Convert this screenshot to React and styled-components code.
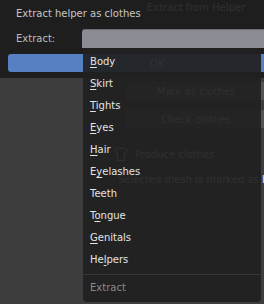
import React from "react";
import styled, { createGlobalStyle } from "styled-components";

const GlobalStyle = createGlobalStyle`
  html, body {
    margin: 0;
    padding: 0;
    background: #3d3d3d;
    overflow: hidden;
  }
  body {
    font-family: "DejaVu Sans", "Liberation Sans", sans-serif;
    font-size: 10px;
  }
`;

const Screen = styled.div`
  position: relative;
  width: 264px;
  height: 304px;
  overflow: hidden;
  background: #3d3d3d;
`;

// sidebar panel that sits behind the popup
const Sidebar = styled.div`
  display: flex;
  flex-direction: column;
  padding-left: 112px;
  color: #e6e6e6;
`;

const PanelButton = styled.div`
  display: flex;
  align-items: center;
  justify-content: center;
  margin-left: 14px;
  margin-top: ${props => props.top || 0}px;
  width: 140px;
  height: ${props => props.h || 18}px;
  border-radius: 3px;
  background: ${props => (props.flat ? "transparent" : "#545454")};
  white-space: nowrap;
`;

const SubHeader = styled.div`
  display: flex;
  align-items: center;
  gap: 6px;
  margin-top: 18px;
  height: 16px;
  padding-left: 1px;
`;

const Note = styled.div`
  margin-top: 12px;
  padding-left: 6px;
  white-space: nowrap;
`;

const Dialog = styled.div`
  position: absolute;
  top: 0;
  left: 0;
  box-sizing: border-box;
  width: 314px;
  height: 78px;
  padding: 6px 8px 0;
  background: rgba(27, 27, 27, 0.9);
  display: flex;
  flex-direction: column;
`;

const Title = styled.div`
  height: 16px;
  line-height: 16px;
  padding-left: 8px;
  color: #c6c6c6;
`;

const FieldRow = styled.div`
  display: flex;
  align-items: center;
  margin-top: 7px;
  height: 19px;
`;

const Label = styled.div`
  width: 74px;
  padding-left: 8px;
  box-sizing: border-box;
  color: #bdbdbd;
`;

const Field = styled.div`
  flex: 1;
  height: 19px;
  box-sizing: border-box;
  border-top: 1px solid #6a6c70;
  border-radius: 3px 3px 0 0;
  background: #898c92;
`;

const OkButton = styled.div`
  margin-top: 6px;
  height: 18px;
  border-radius: 3px;
  background: #5680c2;
  color: #ffffff;
  display: flex;
  align-items: center;
  justify-content: center;
`;

const Menu = styled.div`
  position: absolute;
  top: 48px;
  left: 83px;
  width: 178px;
  box-sizing: border-box;
  padding: 3px 0;
  border-radius: 0 0 4px 4px;
  background: rgba(32, 32, 32, 0.93);
`;

const Item = styled.div`
  height: 22px;
  line-height: 22px;
  padding-left: 7px;
  color: ${props => (props.muted ? "#8a8a8a" : "#e4e4e4")};
  white-space: nowrap;
`;

const Key = styled.span`
  text-decoration: underline;
  text-underline-offset: 2px;
`;

const Separator = styled.div`
  height: 1px;
  margin: 3px 0 2px;
  background: #383838;
`;

const ShirtIcon = () => (
  <svg width="16" height="16" viewBox="0 0 16 16" fill="none" stroke="#e6e6e6" strokeWidth="1" strokeLinejoin="round">
    <path d="M5.5 1.5 L1.5 4 L3 7.5 L4.5 6.8 V14.5 H11.5 V6.8 L13 7.5 L14.5 4 L10.5 1.5 Q8 4 5.5 1.5 Z" />
  </svg>
);

const items = [
  ["", "B", "ody"],
  ["", "S", "kirt"],
  ["", "T", "ights"],
  ["", "E", "yes"],
  ["", "H", "air"],
  ["E", "y", "elashes"],
  ["Teeth", "", ""],
  ["T", "o", "ngue"],
  ["", "G", "enitals"],
  ["He", "l", "pers"]
];

const App = () => (
  <Screen>
    <GlobalStyle />
    <Sidebar>
      <PanelButton flat h={15}>Extract from Helper</PanelButton>
      <PanelButton top={67}>Mark as clothes</PanelButton>
      <PanelButton top={10}>Check clothes</PanelButton>
      <SubHeader>
        <ShirtIcon />
        <span>Produce clothes</span>
      </SubHeader>
      <Note>Selected mesh is marked as helper</Note>
    </Sidebar>

    <Dialog>
      <Title>Extract helper as clothes</Title>
      <FieldRow>
        <Label>Extract:</Label>
        <Field />
      </FieldRow>
      <OkButton>OK</OkButton>
    </Dialog>

    <Menu>
      {items.map(([pre, key, post]) => (
        <Item key={pre + key + post}>
          {pre}
          {key && <Key>{key}</Key>}
          {post}
        </Item>
      ))}
      <Separator />
      <Item muted>Extract</Item>
    </Menu>
  </Screen>
);

export default App;
